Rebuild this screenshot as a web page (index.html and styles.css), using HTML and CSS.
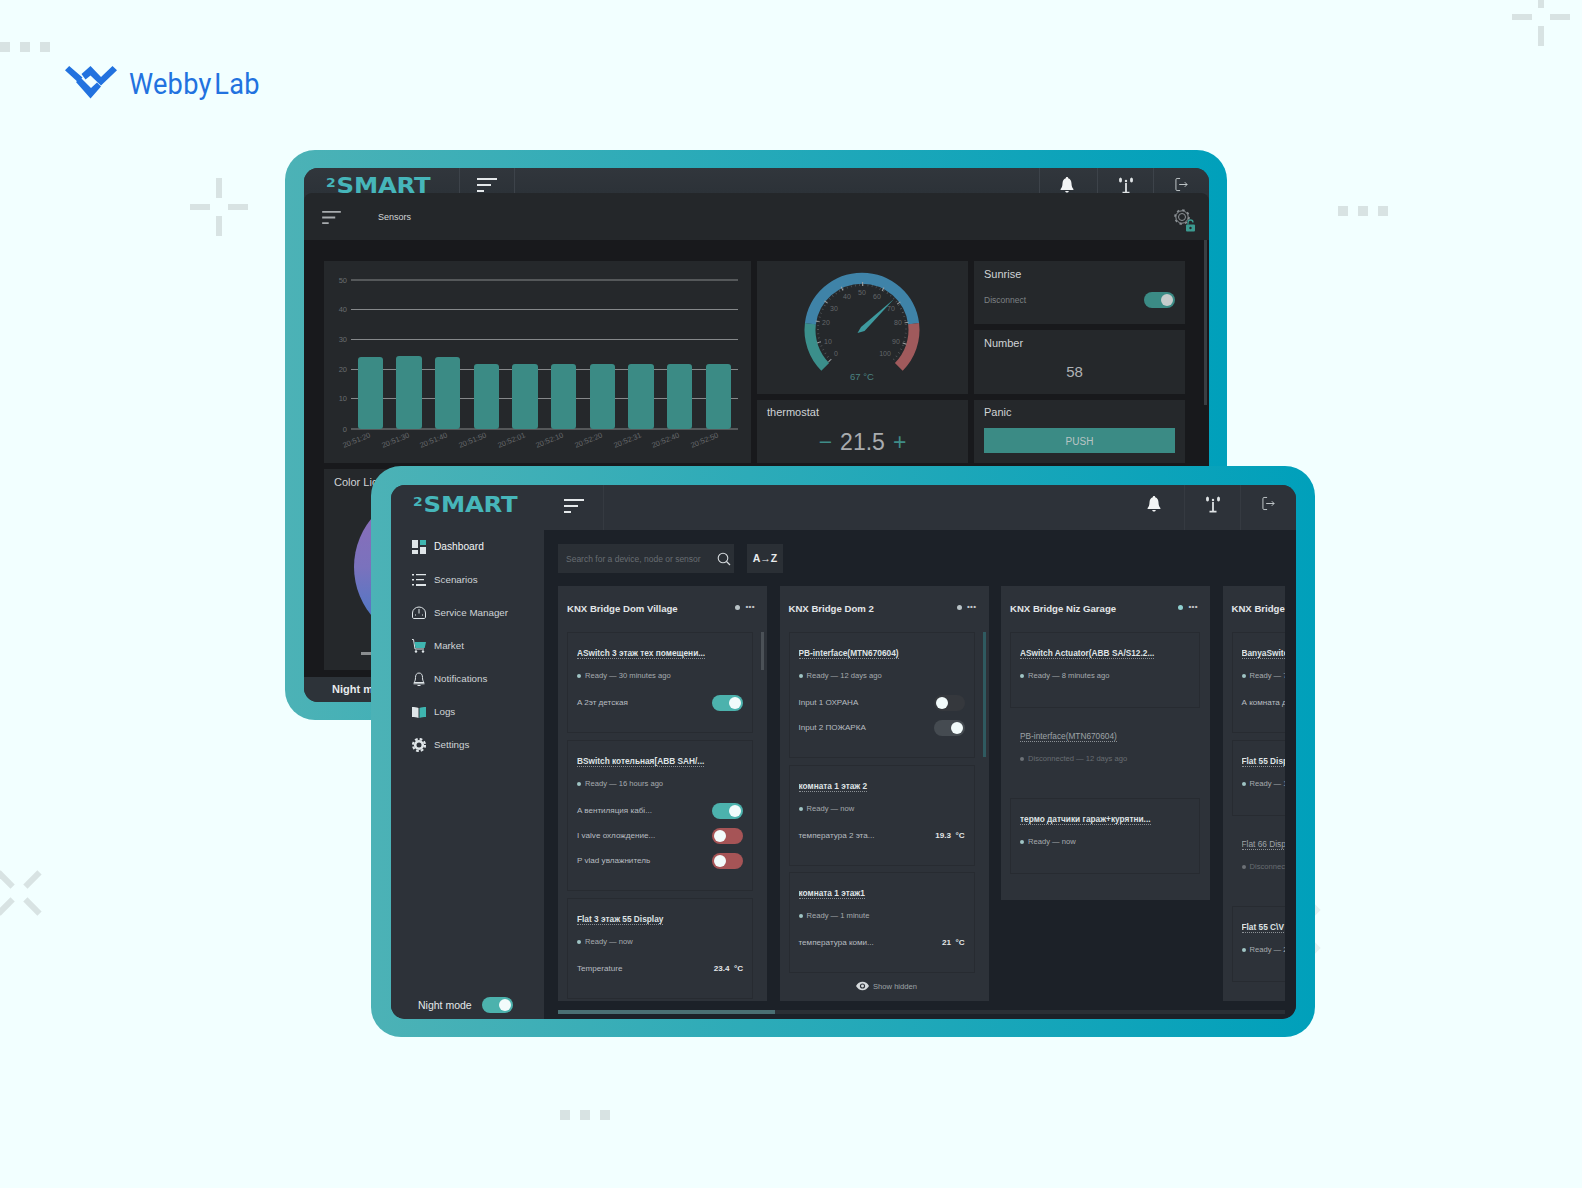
FILE: index.html
```html
<!DOCTYPE html>
<html lang="en">
<head>
<meta charset="utf-8">
<title>WebbyLab 2SMART</title>
<link rel="stylesheet" href="styles.css">
</head>
<body>
<svg class="defs" width="0" height="0" aria-hidden="true">
  <defs>
    <symbol id="i-menu" viewBox="0 0 20 15"><path d="M0 1h20v2H0zM0 7h14v2H0zM0 13h7v2H0z" fill="currentColor"/></symbol>
    <symbol id="i-bell" viewBox="0 0 14 16"><path d="M7 0c.8 0 1.2.6 1.2 1.2C10.500 1.800 11.400 4 11.500 6.500c.1 2.500.7 4.200 1.900 5.500v1H.6v-1c1.200-1.300 1.800-3 1.900-5.500C2.600 4 3.500 1.800 5.800 1.200 5.800.6 6.200 0 7 0zM5.200 14h3.600c-.2 1-.9 1.600-1.800 1.600S5.400 15 5.200 14z" fill="currentColor"/></symbol>
    <symbol id="i-ant" viewBox="0 0 16 17"><g fill="none" stroke="currentColor"><path d="M8 6v9M4.500 15.700h7" stroke-width="1.800"/></g><circle cx="8" cy="4" r="1.200" fill="currentColor"/><ellipse cx="2.500" cy="3" rx="1.500" ry="2.600" fill="currentColor"/><ellipse cx="13.500" cy="3" rx="1.500" ry="2.600" fill="currentColor"/></symbol>
    <symbol id="i-out" viewBox="0 0 14 15"><path d="M5.500 1H2.200C1.500 1 1 1.500 1 2.200v10.600c0 .7.500 1.200 1.200 1.200h3.300M4.500 7.500h8.500M10.500 5l2.500 2.500-2.500 2.500" fill="none" stroke="currentColor" stroke-width="1"/></symbol>
  </defs>
</svg>

<div class="canvas">
  <!-- decoration -->
  <div class="dots dots-a"><i></i><i></i><i></i></div>
  <div class="dots dots-b"><i></i><i></i><i></i></div>
  <div class="dots dots-c"><i></i><i></i><i></i></div>
  <div class="cross cross-a"><i class="t"></i><i class="b"></i><i class="l"></i><i class="r"></i></div>
  <div class="cross cross-b"><i class="t"></i><i class="b"></i><i class="l"></i><i class="r"></i></div>
  <div class="cross cross-c"><i class="t"></i><i class="b"></i><i class="l"></i><i class="r"></i></div>
  <i class="chip chip-a"></i><i class="chip chip-b"></i>

  <div class="brand">
    <svg class="brand-mark" viewBox="0 0 52 33" aria-hidden="true">
      <path fill="#2272df" d="M0 4.300 4.200 0 17.500 11.500 12.800 16ZM16.500 8 25.500 0 36 11 47.500 0 52 4.300 36 19.500 25.500 9.500 20.500 13.500ZM11 16 16 12 26 22 32 16.500 36 20.500 25.500 32.500Z"/>
    </svg>
    <span class="brand-name">Webby<span class="brand-gap">Lab</span></span>
  </div>

  <!-- back tablet -->
  <section class="tablet tablet-back">
    <div class="screen screen-back">
      <header class="bar-back">
        <div class="logo-cell"><span class="logo"><span class="logo-sup">2</span>SMART</span></div>
        <div class="menu-cell"><svg class="ico-menu"><use href="#i-menu"/></svg></div>
        <div class="bar-spacer"></div>
        <div class="bar-cell bar-cell-wide"><svg class="ico-bell"><use href="#i-bell"/></svg></div>
        <div class="bar-cell"><svg class="ico-ant"><use href="#i-ant"/></svg></div>
        <div class="bar-cell"><svg class="ico-out"><use href="#i-out"/></svg></div>
      </header>
      <div class="subbar">
        <svg class="sub-menu"><use href="#i-menu"/></svg>
        <span class="sub-title">Sensors</span>
        <span class="sub-gear">
          <svg viewBox="0 0 30 30" width="30" height="30" aria-hidden="true">
            <circle cx="11" cy="10" r="3.500" fill="none" stroke="#8d9296" stroke-width="1"/>
            <circle cx="11" cy="10" r="6.200" fill="none" stroke="#8d9296" stroke-width="1"/>
            <circle cx="11" cy="10" r="7" fill="none" stroke="#8d9296" stroke-width="1.600" stroke-dasharray="2.500 3"/>
            <rect x="15" y="17.500" width="9" height="7" rx="1" fill="#3b9a90"/>
            <path d="M17 17.500v-2a2.500 2.500 0 0 1 5 0" fill="none" stroke="#3b9a90" stroke-width="1.300"/>
            <circle cx="19.500" cy="21" r="1.200" fill="#24272a"/>
          </svg>
        </span>
      </div>
      <div class="dash">
        <div class="dash-grid">
          <div class="panel panel-chart">
            <svg class="chart" viewBox="0 0 427 202" width="427" height="202" aria-label="Bar chart">
              <g class="grid-lines">
                <path d="M27 19H414M27 48.500H414M27 78.500H414M27 108.500H414M27 137.500H414M27 168H414"/>
              </g>
              <g class="axis-y" text-anchor="end">
                <text x="23" y="21.500">50</text><text x="23" y="51">40</text><text x="23" y="81">30</text><text x="23" y="111">20</text><text x="23" y="140">10</text><text x="23" y="170.500">0</text>
              </g>
              <g class="bars">
                <rect x="34" y="96" width="25" height="72" rx="3"/>
                <rect x="72" y="95" width="26" height="73" rx="3"/>
                <rect x="111" y="96" width="25" height="72" rx="3"/>
                <rect x="150" y="103" width="25" height="65" rx="3"/>
                <rect x="188" y="103" width="26" height="65" rx="3"/>
                <rect x="227" y="103" width="25" height="65" rx="3"/>
                <rect x="266" y="103" width="25" height="65" rx="3"/>
                <rect x="304" y="103" width="26" height="65" rx="3"/>
                <rect x="343" y="103" width="25" height="65" rx="3"/>
                <rect x="382" y="103" width="25" height="65" rx="3"/>
              </g>
              <g class="axis-x" text-anchor="end">
                <text transform="translate(47 176) rotate(-22)">20:51:20</text>
                <text transform="translate(86 176) rotate(-22)">20:51:30</text>
                <text transform="translate(124 176) rotate(-22)">20:51:40</text>
                <text transform="translate(163 176) rotate(-22)">20:51:50</text>
                <text transform="translate(202 176) rotate(-22)">20:52:01</text>
                <text transform="translate(240 176) rotate(-22)">20:52:10</text>
                <text transform="translate(279 176) rotate(-22)">20:52:20</text>
                <text transform="translate(318 176) rotate(-22)">20:52:31</text>
                <text transform="translate(356 176) rotate(-22)">20:52:40</text>
                <text transform="translate(395 176) rotate(-22)">20:52:50</text>
              </g>
            </svg>
          </div>
          <div class="panel panel-gauge">
            <svg class="gauge" viewBox="0 0 211 133" width="211" height="133" aria-label="Gauge">
              <g fill="none" stroke-width="11" transform="translate(0 2)">
                <path d="M68.200 103.800A52 52 0 0 1 53.400 60.700" stroke="#3b8f8b"/>
                <path d="M53.400 60.700A52 52 0 0 1 156.600 60.700" stroke="#3f83a8"/>
                <path d="M156.600 60.700A52 52 0 0 1 141.800 103.800" stroke="#a05a5c"/>
              </g>
              <g transform="translate(0 1)">
                <path class="tick-major" d="M73.200 98.800A45 45 0 1 1 136.800 98.800" />
                <path class="tick-minor" d="M73.900 98.100A44 44 0 1 1 136.100 98.100" />
              </g>
              <g class="gauge-nums" text-anchor="middle">
                <text x="79" y="95">0</text><text x="71" y="83">10</text><text x="69" y="64">20</text><text x="77" y="50">30</text><text x="90" y="38">40</text><text x="105" y="34">50</text><text x="120" y="38">60</text><text x="134" y="50">70</text><text x="141" y="64">80</text><text x="139" y="83">90</text><text x="128" y="95">100</text>
              </g>
              <path d="M100.500 72 104 66 137 38 107.500 70Z" fill="#3e9a9f"/>
              <text class="gauge-val" x="105" y="119" text-anchor="middle">67 °C</text>
            </svg>
          </div>
          <div class="panel panel-tile">
            <div class="tile-title">Sunrise</div>
            <div class="tile-row">
              <span class="tile-muted">Disconnect</span>
              <span class="toggle toggle-back"><i></i></span>
            </div>
          </div>
          <div class="panel panel-tile">
            <div class="tile-title">Number</div>
            <div class="tile-number">58</div>
          </div>
          <div class="panel panel-tile panel-low">
            <div class="tile-title">thermostat</div>
            <div class="thermo"><span class="sign">−</span><span>21.5</span><span class="sign">+</span></div>
          </div>
          <div class="panel panel-tile panel-low">
            <div class="tile-title">Panic</div>
            <div class="push">PUSH</div>
          </div>
          <div class="panel panel-color">
            <div class="tile-title">Color Light</div>
            <div class="color-wheel"></div>
            <div class="color-dash"></div>
          </div>
        </div>
        <div class="back-scroll"></div>
      </div>
      <footer class="back-foot">Night mode</footer>
    </div>
  </section>

  <!-- front tablet -->
  <section class="tablet tablet-front">
    <div class="screen screen-front">
      <header class="bar-front">
        <div class="front-logo"><span class="logo"><span class="logo-sup">2</span>SMART</span></div>
        <div class="front-menu"><svg class="ico-menu"><use href="#i-menu"/></svg></div>
        <div class="bar-spacer"></div>
        <div class="front-cell front-cell-first"><svg class="ico-bell"><use href="#i-bell"/></svg></div>
        <div class="front-cell"><svg class="ico-ant"><use href="#i-ant"/></svg></div>
        <div class="front-cell"><svg class="ico-out"><use href="#i-out"/></svg></div>
      </header>
      <div class="front-body">
        <aside class="sidebar">
          <nav class="nav">
            <a class="nav-item nav-active">
              <svg class="nav-ico" viewBox="0 0 14 14"><path fill="#dfe5e8" d="M0 0h6v8H0zM0 10h6v4H0zM8 7h6v7H8z"/><path fill="#3eb5b0" d="M8 0h6v5H8z"/></svg>
              <span>Dashboard</span>
            </a>
            <a class="nav-item">
              <svg class="nav-ico" viewBox="0 0 14 14"><path fill="#dfe5e8" d="M0 1h2v1.500H0zM0 6h2v1.500H0zM0 11h2v1.500H0zM4 1h10v1.200H4zM4 6h8v1.200H4zM4 11h10v2H4z"/></svg>
              <span>Scenarios</span>
            </a>
            <a class="nav-item">
              <svg class="nav-ico" viewBox="0 0 14 14"><path fill="none" stroke="#dfe5e8" stroke-width="1" d="M2 12.500h10c1 0 1.500-.7 1.500-1.500V7A6.500 6 0 0 0 .5 7v4c0 .8.500 1.500 1.500 1.500zM7 3v4.500M3 9h1M10 9h1"/></svg>
              <span>Service Manager</span>
            </a>
            <a class="nav-item">
              <svg class="nav-ico" viewBox="0 0 14 14"><path fill="none" stroke="#dfe5e8" stroke-width="1" d="M0 .5h1.500L3 10h9"/><path fill="#3eb5b0" d="M2.500 3H14l-1.300 6H3.500z"/><circle cx="4" cy="12.500" r="1.200" fill="#dfe5e8"/><circle cx="11" cy="12.500" r="1.200" fill="#dfe5e8"/></svg>
              <span>Market</span>
            </a>
            <a class="nav-item">
              <svg class="nav-ico" viewBox="0 0 14 14"><path fill="none" stroke="#dfe5e8" stroke-width="1" d="M7 1c2.500 0 3.500 2 3.500 4.500 0 2.200.5 3.700 1.500 5H2c1-1.300 1.500-2.800 1.500-5C3.500 3 4.500 1 7 1zM1.500 11.800h11M5.500 13.500h3"/></svg>
              <span>Notifications</span>
            </a>
            <a class="nav-item">
              <svg class="nav-ico" viewBox="0 0 14 14"><path fill="#dfe5e8" d="M0 2c2.500 0 4.500 0 6.500 1v10C4.500 12 2.500 12 0 12z"/><path fill="#3eb5b0" d="M7.500 3c2-1 4-1 6.500-1v10c-2.500 0-4.500 0-6.500 1z"/></svg>
              <span>Logs</span>
            </a>
            <a class="nav-item">
              <svg class="nav-ico" viewBox="0 0 14 14"><circle cx="7" cy="7" r="3.800" fill="none" stroke="#dfe5e8" stroke-width="2.600"/><circle cx="7" cy="7" r="6" fill="none" stroke="#dfe5e8" stroke-width="2.200" stroke-dasharray="2.700 2"/></svg>
              <span>Settings</span>
            </a>
          </nav>
          <div class="night">
            <span>Night mode</span>
            <span class="toggle toggle-on"><i></i></span>
          </div>
        </aside>
        <main class="main">
          <div class="tools">
            <div class="search">
              <span class="search-text">Search for a device, node or sensor</span>
              <svg class="search-ico" viewBox="0 0 14 14"><circle cx="6" cy="6" r="4.800" fill="none" stroke="#d5dadd" stroke-width="1.100"/><path d="M9.500 9.500 13 13" stroke="#d5dadd" stroke-width="1.300"/></svg>
            </div>
            <div class="sort">A→Z</div>
          </div>
          <div class="board">
            <!-- column 1 -->
            <div class="col col-first">
              <div class="col-head"><span class="col-name">KNX Bridge Dom Village</span><span class="col-meta"><i class="col-dot"></i><b>•••</b></span></div>
              <article class="card">
                <div class="card-title"><span>ASwitch 3 этаж тех помещени...</span></div>
                <div class="status"><i></i>Ready — 30 minutes ago</div>
                <div class="rows"><div class="row"><span>A 2эт детская</span><span class="toggle toggle-on"><i></i></span></div></div>
              </article>
              <article class="card">
                <div class="card-title"><span>BSwitch котельная[ABB SAH/...</span></div>
                <div class="status"><i></i>Ready — 16 hours ago</div>
                <div class="rows">
                  <div class="row"><span>A вентиляция кабі...</span><span class="toggle toggle-on"><i></i></span></div>
                  <div class="row"><span>I valve охлождение...</span><span class="toggle toggle-off"><i></i></span></div>
                  <div class="row"><span>P vlad увлажнитель</span><span class="toggle toggle-off"><i></i></span></div>
                </div>
              </article>
              <article class="card">
                <div class="card-title"><span>Flat 3 этаж 55 Display</span></div>
                <div class="status"><i></i>Ready — now</div>
                <div class="rows"><div class="row"><span>Temperature</span><span class="reading">23.4 &nbsp;°C</span></div></div>
              </article>
              <div class="col-scroll col-scroll-a"></div>
            </div>
            <!-- column 2 -->
            <div class="col col-second">
              <div class="col-head"><span class="col-name">KNX Bridge Dom 2</span><span class="col-meta"><i class="col-dot"></i><b>•••</b></span></div>
              <article class="card">
                <div class="card-title"><span>PB-interface(MTN670604)</span></div>
                <div class="status"><i></i>Ready — 12 days ago</div>
                <div class="rows">
                  <div class="row"><span>Input 1 ОХРАНА</span><span class="toggle toggle-dim"><i></i></span></div>
                  <div class="row"><span>Input 2 ПОЖАРКА</span><span class="toggle toggle-grey"><i></i></span></div>
                </div>
              </article>
              <article class="card card-tight">
                <div class="card-title"><span>комната 1 этаж 2</span></div>
                <div class="status"><i></i>Ready — now</div>
                <div class="rows"><div class="row"><span>температура 2 эта...</span><span class="reading">19.3 &nbsp;°C</span></div></div>
              </article>
              <article class="card">
                <div class="card-title"><span>комната 1 этаж1</span></div>
                <div class="status"><i></i>Ready — 1 minute</div>
                <div class="rows"><div class="row"><span>температура коми...</span><span class="reading">21 &nbsp;°C</span></div></div>
              </article>
              <div class="show-hidden">
                <svg viewBox="0 0 14 10" width="13" height="10"><path d="M0 5c1.800-3 4.200-4.500 7-4.500S12.200 2 14 5c-1.800 3-4.200 4.500-7 4.500S1.800 8 0 5z" fill="#d5dadd"/><circle cx="7" cy="5" r="2.800" fill="#2d3239"/><circle cx="7" cy="5" r="1.600" fill="#d5dadd"/></svg>
                <span>Show hidden</span>
              </div>
              <div class="col-scroll col-scroll-b"></div>
            </div>
            <!-- column 3 -->
            <div class="col col-short">
              <div class="col-head"><span class="col-name">KNX Bridge Niz Garage</span><span class="col-meta"><i class="col-dot col-dot-on"></i><b>•••</b></span></div>
              <article class="card">
                <div class="card-title"><span>ASwitch Actuator(ABB SA/S12.2...</span></div>
                <div class="status"><i></i>Ready — 8 minutes ago</div>
              </article>
              <article class="card card-off">
                <div class="card-title"><span>PB-interface(MTN670604)</span></div>
                <div class="status"><i></i>Disconnected — 12 days ago</div>
              </article>
              <article class="card">
                <div class="card-title"><span>термо датчики гараж+курятни...</span></div>
                <div class="status"><i></i>Ready — now</div>
              </article>
            </div>
            <!-- column 4 -->
            <div class="col">
              <div class="col-head"><span class="col-name">KNX Bridge Flat</span></div>
              <article class="card">
                <div class="card-title"><span>BanyaSwitch</span></div>
                <div class="status"><i></i>Ready — 7 minutes</div>
                <div class="rows"><div class="row"><span>А комната детская</span></div></div>
              </article>
              <article class="card">
                <div class="card-title"><span>Flat 55 Display</span></div>
                <div class="status"><i></i>Ready — 1 minute</div>
              </article>
              <article class="card card-off">
                <div class="card-title"><span>Flat 66 Display</span></div>
                <div class="status"><i></i>Disconnected</div>
              </article>
              <article class="card">
                <div class="card-title"><span>Flat 55 C\V</span></div>
                <div class="status"><i></i>Ready — 2 minutes</div>
              </article>
            </div>
          </div>
          <div class="hscroll"><div class="hscroll-thumb"></div></div>
        </main>
      </div>
    </div>
  </section>
</div>
</body>
</html>
```

FILE: styles.css
```css
* { box-sizing: border-box; }
html, body { margin: 0; padding: 0; }
body { background: #f2ffff; font-family: "Liberation Sans", Arial, sans-serif; }
.defs { position: absolute; }
.canvas { position: relative; width: 1582px; height: 1188px; overflow: hidden; background: #f2ffff; }
i { display: block; font-style: normal; }

/* decoration */
.dots { position: absolute; display: flex; gap: 10px; }
.dots i { width: 10px; height: 10px; background: #d8e3e3; }
.dots-a { left: 0; top: 42px; }
.dots-b { left: 1338px; top: 206px; }
.dots-c { left: 560px; top: 1110px; }
.cross { position: absolute; width: 58px; height: 58px; }
.cross i { position: absolute; background: #d8e3e3; }
.cross .t, .cross .b { left: 26px; width: 6px; height: 20px; }
.cross .l, .cross .r { top: 26px; width: 20px; height: 6px; }
.cross .t { top: 0; } .cross .b { bottom: 0; }
.cross .l { left: 0; } .cross .r { right: 0; }
.cross-a { left: 190px; top: 178px; }
.cross-b { left: 1512px; top: -12px; }
.cross-c { left: -10px; top: 864px; transform: rotate(45deg); }
.chip { position: absolute; width: 8px; height: 8px; background: #e4f0f0; transform: rotate(45deg); }
.chip-a { left: 1311px; top: 906px; }
.chip-b { left: 1311px; top: 944px; }

/* brand */
.brand { position: absolute; left: 65px; top: 66px; display: flex; align-items: flex-start; gap: 12px; color: #2272df; }
.brand-mark { width: 52px; height: 33px; display: block; }
.brand-name { display: inline-block; font-family: Roboto, "Liberation Sans", sans-serif; font-size: 30px; line-height: 36px; letter-spacing: .3px; transform: scaleX(.905); transform-origin: left center; white-space: nowrap; }
.brand-gap { margin-left: 3px; }

/* tablets */
.tablet { position: absolute; background: linear-gradient(90deg, #4cb2b6 0%, #2dabb8 40%, #00a0bb 100%); }
.tablet-back { left: 285px; top: 150px; width: 942px; height: 570px; padding: 18px 18px 18px 19px; border-radius: 30px; }
.tablet-front { left: 371px; top: 466px; width: 944px; height: 571px; padding: 19px 19px 18px 20px; border-radius: 30px; }
.screen { width: 100%; height: 100%; overflow: hidden; border-radius: 14px; display: flex; flex-direction: column; }

/* shared logo */
.logo { display: inline-block; font-family: "DejaVu Sans", sans-serif; font-weight: 700; font-size: 21px; line-height: 22px; color: #46b6ba; letter-spacing: -.2px; transform: scaleX(1.16); transform-origin: left center; white-space: nowrap; }
.logo-sup { font-size: 12px; vertical-align: 6px; color: #46b6ba; margin-right: 1px; }
.ico-menu { width: 20px; height: 15px; color: #e4e8ea; display: block; }
.ico-bell { width: 14px; height: 16px; color: #f2f4f5; display: block; }
.ico-ant { width: 16px; height: 17px; color: #dfe3e5; display: block; }
.ico-out { width: 13px; height: 15px; color: #c9cfd2; display: block; }

/* back tablet */
.screen-back { background: #2d3339; }
.bar-back { flex: 0 0 25px; display: flex; background: linear-gradient(180deg, #31363c, #2c3238); overflow: hidden; }
.logo-cell { width: 155px; padding: 4px 0 0 22px; }
.menu-cell { width: 56px; border-left: 1px solid #3d434a; border-right: 1px solid #3d434a; padding: 9px 0 0 17px; }
.bar-spacer { flex: 1; }
.bar-cell { width: 56px; border-left: 1px solid #3d434a; display: flex; justify-content: center; padding-top: 9px; }
.bar-cell-wide { width: 58px; padding-right: 3px; }
.subbar { flex: 0 0 47px; background: #24272a; border-radius: 8px 8px 0 0; display: flex; align-items: center; padding: 0 0 0 18px; position: relative; }
.sub-menu { width: 19px; height: 14px; color: #a8acaf; }
.sub-title { margin-left: 37px; font-size: 9px; color: #d2d5d7; }
.sub-gear { margin-left: auto; padding: 10px 8px 0 0; display: flex; }
.dash { flex: 1; background: #18191c; padding: 21px 0 0 20px; position: relative; min-height: 0; overflow: hidden; }
.dash-grid { display: grid; grid-template-columns: 427px 211px 211px; grid-template-rows: 63px 64px 63px 201px; gap: 6px; }
.panel { background: #25282b; position: relative; }
.panel-chart { grid-column: 1; grid-row: 1 / span 3; }
.panel-gauge { grid-column: 2; grid-row: 1 / span 2; }
.panel-color { grid-column: 1; grid-row: 4; padding: 6px 10px; overflow: hidden; }
.panel-tile { padding: 6px 10px; }
.panel-low { padding-top: 5px; }
.tile-title { font-size: 11px; line-height: 15px; color: #d0d3d6; }
.tile-row { display: flex; justify-content: space-between; align-items: center; margin-top: 10px; }
.tile-muted { font-size: 8.500px; color: #7d8184; }
.tile-number { text-align: center; font-size: 15px; line-height: 18px; color: #b0b3b6; margin-top: 12px; padding-right: 10px; }
.thermo { display: flex; justify-content: center; gap: 8px; font-size: 23px; line-height: 26px; margin-top: 9px; color: #a9acaf; }
.sign { color: #3f8d88; }
.push { height: 25px; margin-top: 8px; background: #3b8b85; color: #b9c4c4; font-size: 10px; line-height: 27px; text-align: center; }
.chart, .gauge { display: block; }
.grid-lines path { stroke: #85888a; stroke-width: 1.200; fill: none; }
.bars rect { fill: #3b8b85; }
.axis-y text { font-size: 7.500px; fill: #6a6d70; }
.axis-x text { font-size: 7.500px; fill: #66696c; }
.tick-major { fill: none; stroke: #9ea2a5; stroke-width: 4; stroke-dasharray: 1 20.200; }
.tick-minor { fill: none; stroke: #5d6164; stroke-width: 2; stroke-dasharray: .6 3.600; }
.gauge-nums text { font-size: 7px; fill: #63676a; }
.gauge-val { font-size: 9.500px; fill: #4b8482; }
.color-wheel { position: absolute; left: 30px; top: 22px; width: 152px; height: 152px; border-radius: 50%; background: linear-gradient(180deg, #8f6cb8 0%, #7a72bd 50%, #4f78c6 85%); }
.color-dash { position: absolute; left: 37px; top: 183px; width: 40px; height: 3px; background: #8b8e90; }
.back-scroll { position: absolute; right: 2px; top: 0; width: 3px; height: 165px; background: #3a3e42; }
.back-foot { flex: 0 0 25px; font-size: 11px; font-weight: 700; line-height: 25px; color: #e8ebed; padding-left: 28px; background: #2d3339; }

/* front tablet */
.screen-front { background: #2d3239; }
.bar-front { flex: 0 0 45px; display: flex; background: #2d3239; }
.front-logo { width: 153px; padding: 6px 0 0 22px; }
.front-menu { width: 60px; padding: 13px 0 0 20px; border-right: 1px solid #353a41; }
.front-cell { width: 56px; display: flex; justify-content: center; padding-top: 11px; border-left: 1px solid #353a41; }
.front-cell-first { border-left: 0; width: 58px; padding-right: 3px; }
.front-body { flex: 1; display: flex; min-height: 0; }
.sidebar { width: 153px; display: flex; flex-direction: column; justify-content: space-between; padding: 0 0 6px 21px; background: #2d3239; }
.nav { display: flex; flex-direction: column; }
.nav-item { height: 33px; display: flex; align-items: center; gap: 8px; font-size: 9.800px; color: #cfd4d7; }
.nav-active { color: #f1f4f5; font-size: 10.200px; }
.nav-ico { width: 14px; height: 14px; flex: none; }
.night { display: flex; align-items: center; gap: 10px; font-size: 10.500px; color: #e4e8ea; padding-left: 6px; }
.main { flex: 1; min-width: 0; background: #1c2128; padding: 14px 11px 0 14px; display: flex; flex-direction: column; }
.tools { display: flex; gap: 13px; height: 29px; }
.search { width: 176px; background: #2a2f35; display: flex; align-items: center; justify-content: space-between; padding: 0 3px 0 8px; }
.search-text { font-size: 8.500px; color: #686d72; white-space: nowrap; }
.search-ico { width: 14px; height: 14px; flex: none; }
.sort { width: 36px; background: #2a2f35; color: #e8ebed; font-size: 10.500px; font-weight: 700; line-height: 29px; text-align: center; white-space: nowrap; }
.board { margin-top: 13px; height: 415px; display: flex; gap: 12.500px; overflow: hidden; align-items: stretch; }
.col { flex: 0 0 209px; background: #2d3239; padding: 0 10px 0 9px; position: relative; }
.col-first .card, .col-second .card { margin-right: 4px; }
.col-short { align-self: flex-start; padding-bottom: 19px; }
.col-head { height: 46px; display: flex; justify-content: space-between; padding-top: 16px; }
.col-name { font-size: 9.600px; line-height: 14px; font-weight: 700; color: #e3e6e8; white-space: nowrap; }
.col-meta { display: flex; gap: 5px; align-items: flex-start; padding-right: 2px; }
.col-meta b { font-size: 8px; line-height: 10px; color: #c2c7ca; font-weight: 700; letter-spacing: .4px; }
.col-dot { width: 5px; height: 5px; margin-top: 3px; border-radius: 50%; background: #b8c2c6; }
.col-dot-on { background: #8fd0d0; }
.card { border: 1px solid #272b31; padding: 13px 9px 24px; margin-bottom: 7px; }
.card-tight { margin-bottom: 6px; }
.card-off { border-color: transparent; }
.card-title { font-size: 8.300px; line-height: 14px; font-weight: 700; color: #dfe3e5; white-space: nowrap; overflow: hidden; }
.card-title span { border-bottom: 1px dotted #8b9095; }
.card-off .card-title { font-weight: 400; color: #9ea3a7; }
.card-off .status { color: #686d72; }
.card-off .status i { background: #6c7176; }
.status { margin-top: 9px; display: flex; align-items: center; gap: 4px; font-size: 7.600px; line-height: 14px; color: #a6abaf; white-space: nowrap; }
.status i { width: 4px; height: 4px; border-radius: 50%; background: #9fc4c4; flex: none; }
.rows { margin: 7px 0 -7px; }
.row { height: 25px; display: flex; align-items: center; justify-content: space-between; font-size: 8.100px; color: #b7bcc0; white-space: nowrap; }
.reading { font-weight: 700; color: #e3e6e8; }
.col-scroll { position: absolute; right: 3px; width: 3px; }
.col-scroll-a { top: 46px; height: 38px; background: #4b5157; }
.col-scroll-b { top: 46px; height: 125px; background: #2f5a60; }
.show-hidden { display: flex; align-items: center; justify-content: center; gap: 4px; font-size: 7.600px; color: #9da2a6; margin: 8px 0 0 6px; }
.hscroll { margin-top: 9px; height: 4px; background: #2a2f35; }
.hscroll-thumb { width: 217px; height: 4px; background: #4a6f73; }

/* toggles */
.toggle { display: flex; align-items: center; width: 31px; height: 16px; border-radius: 8px; padding: 0 2px; flex: none; }
.toggle i { width: 12px; height: 12px; border-radius: 50%; background: #f2fbfb; }
.toggle-on { background: #4cb2ad; justify-content: flex-end; }
.toggle-off { background: #a65456; justify-content: flex-start; }
.toggle-dim { background: #35383d; justify-content: flex-start; }
.toggle-grey { background: #454b51; justify-content: flex-end; }
.toggle-back { background: #3b8b85; justify-content: flex-end; }
.toggle-back i { background: #c6cccc; }
```
